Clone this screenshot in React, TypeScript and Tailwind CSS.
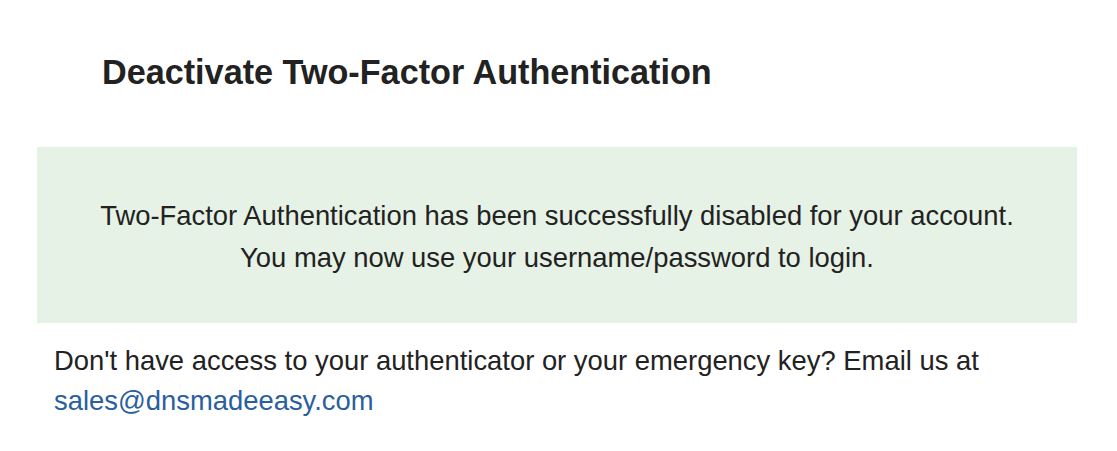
export default function App() {
  return (
    <div className="min-h-[451px] bg-white text-[#222] font-['Liberation_Sans',Arial,sans-serif]">
      <div className="pt-[50px] pl-[102px]">
        <h1 className="text-[34.2px] font-bold leading-[44px]">Deactivate Two-Factor Authentication</h1>
      </div>
      <div className="mx-[37px] mt-[53px] w-[1040px] bg-[#e6f2e5] pt-[48px] pb-[44px] text-center text-[27.4px] leading-[42px]">
        <p>Two-Factor Authentication has been successfully disabled for your account.</p>
        <p>You may now use your username/password to login.</p>
      </div>
      <div className="pl-[54px] pt-[18px] text-[27.4px] leading-[40px]">
        <p>Don't have access to your authenticator or your emergency key? Email us at</p>
        <a href="#" className="text-[#2a5f9e]">sales@dnsmadeeasy.com</a>
      </div>
    </div>
  );
}
